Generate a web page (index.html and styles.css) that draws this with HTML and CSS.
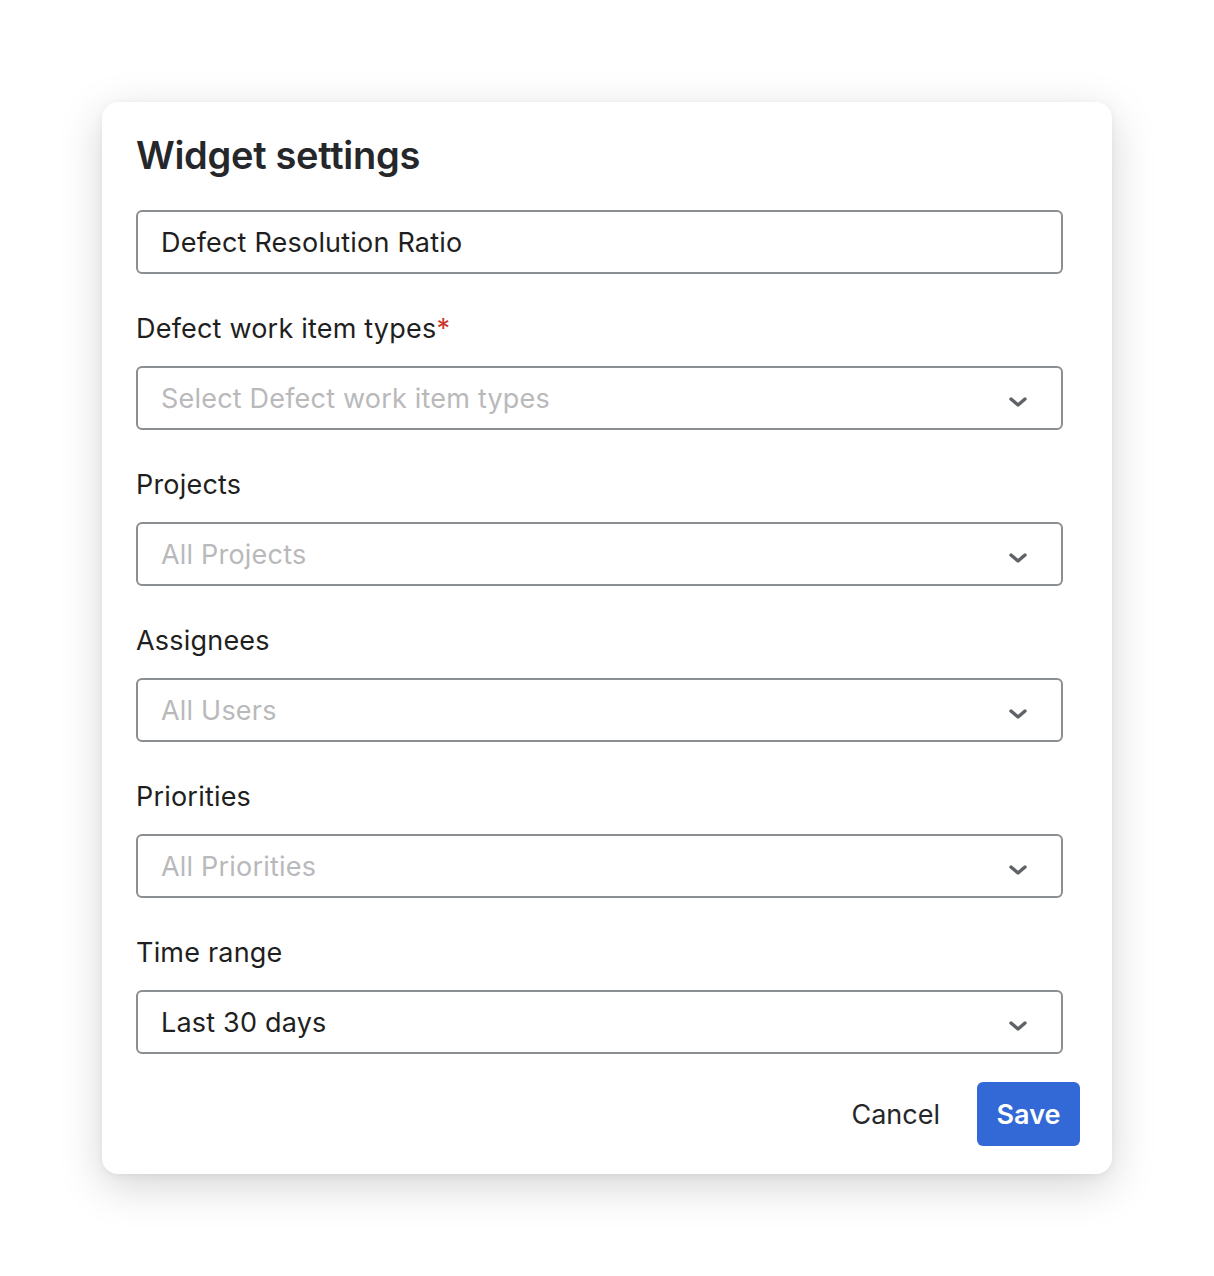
FILE: index.html
```html
<!DOCTYPE html>
<html lang="en">
<head>
    <meta charset="UTF-8">
    <title>Widget settings</title>
    <link rel="stylesheet" href="styles.css">
</head>
<body>
    <div class="dialog">
        <h1 class="title">Widget settings</h1>

        <div class="fields">
            <div class="input">Defect Resolution Ratio</div>

            <label class="label">Defect work item types<span class="req">*</span></label>
            <div class="select placeholder">
                <span>Select Defect work item types</span>
                <svg class="chev" width="18" height="12" viewBox="0 0 18 12"><polyline points="2,3 9,9 16,3"/></svg>
            </div>

            <label class="label">Projects</label>
            <div class="select placeholder">
                <span>All Projects</span>
                <svg class="chev" width="18" height="12" viewBox="0 0 18 12"><polyline points="2,3 9,9 16,3"/></svg>
            </div>

            <label class="label">Assignees</label>
            <div class="select placeholder">
                <span>All Users</span>
                <svg class="chev" width="18" height="12" viewBox="0 0 18 12"><polyline points="2,3 9,9 16,3"/></svg>
            </div>

            <label class="label">Priorities</label>
            <div class="select placeholder">
                <span>All Priorities</span>
                <svg class="chev" width="18" height="12" viewBox="0 0 18 12"><polyline points="2,3 9,9 16,3"/></svg>
            </div>

            <label class="label">Time range</label>
            <div class="select">
                <span>Last 30 days</span>
                <svg class="chev" width="18" height="12" viewBox="0 0 18 12"><polyline points="2,3 9,9 16,3"/></svg>
            </div>
        </div>

        <div class="footer">
            <button class="btn cancel">Cancel</button>
            <button class="btn save">Save</button>
        </div>
    </div>
</body>
</html>
```

FILE: styles.css
```css
body {
    margin: 0;
    min-height: 1276px;
    background: #ffffff;
    font-family: Inter, "Noto Sans", sans-serif;
    color: #1f1f21;
}
.dialog {
    box-sizing: border-box;
    width: 1010px;
    margin: 0 0 0 102px;
    position: relative;
    top: 102px;
    padding: 27px 32px 28px 34px;
    background: #fff;
    border-radius: 16px;
    box-shadow: 0 12px 44px rgba(0, 0, 0, 0.17), 0 2px 8px rgba(0, 0, 0, 0.05);
}
.title {
    margin: 0;
    font-size: 38px;
    line-height: 52px;
    font-weight: 600;
    color: #26272b;
    letter-spacing: -0.3px;
}
.fields {
    display: flex;
    flex-direction: column;
    margin-top: 29px;
    padding-right: 17px;
}
.input,
.select {
    box-sizing: border-box;
    height: 64px;
    border: 2px solid #8b8e92;
    border-radius: 6px;
    padding: 0 34px 0 23px;
    display: flex;
    align-items: center;
    font-size: 27px;
    letter-spacing: 0.2px;
    color: #1f1f21;
}
.select {
    justify-content: space-between;
}
.placeholder {
    color: #b9b9bb;
}
.chev {
    flex: none;
    fill: none;
    stroke: #5f6266;
    stroke-width: 3.4;
    stroke-linecap: round;
    stroke-linejoin: round;
    margin-top: 7px;
}
.label {
    display: block;
    height: 32px;
    margin: 39px 0 21px;
    font-size: 27px;
    letter-spacing: 0.2px;
    line-height: 32px;
    color: #1f1f21;
}
.req {
    color: #c9372c;
}
.footer {
    display: flex;
    justify-content: flex-end;
    align-items: center;
    gap: 17px;
    margin-top: 28px;
}
.btn {
    height: 64px;
    border: none;
    border-radius: 6px;
    font-family: inherit;
    font-size: 27px;
    padding: 0 20px;
    background: none;
    color: #26272b;
}
.save {
    width: 103px;
    padding: 0;
    background: #3369d6;
    color: #fff;
    font-weight: 600;
}
```
